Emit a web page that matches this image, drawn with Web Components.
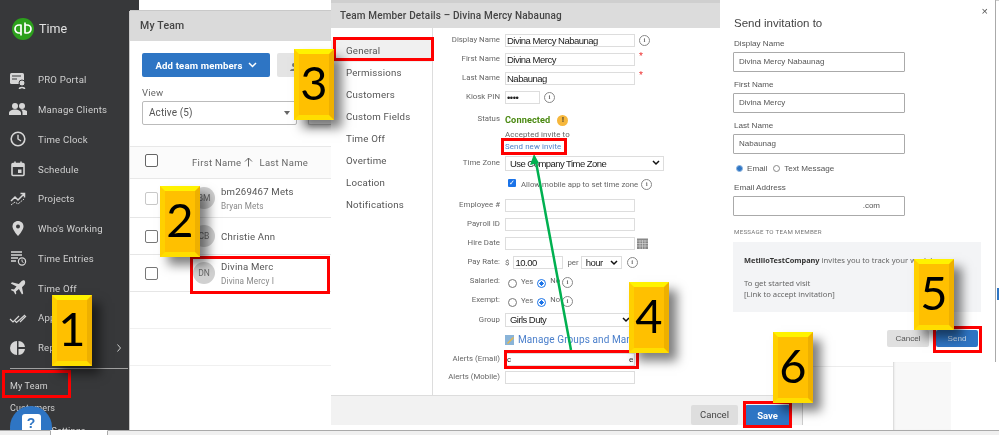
<!DOCTYPE html>
<html lang="en"><head><meta charset="utf-8"><title>My Team</title>
<style>
html,body{margin:0;padding:0;background:#fff;overflow:hidden}
body{font-family:"Roboto","Liberation Sans",sans-serif}
</style></head><body>
<tb-app>
  <tb-sidebar slot="sidebar">
    <nav-item icon="pro">PRO Portal</nav-item>
    <nav-item icon="clients">Manage Clients</nav-item>
    <nav-item icon="clock">Time Clock</nav-item>
    <nav-item icon="cal">Schedule</nav-item>
    <nav-item icon="proj">Projects</nav-item>
    <nav-item icon="pin">Who's Working</nav-item>
    <nav-item icon="entries">Time Entries</nav-item>
    <nav-item icon="plane">Time Off</nav-item>
    <nav-item icon="check">Approvals</nav-item>
    <nav-item icon="pie" chevron>Reports</nav-item>
    <sub-item slot="sub">My Team</sub-item>
    <sub-item slot="sub">Customers</sub-item>
    <sub-item slot="sub">Company Settings</sub-item>
  </tb-sidebar>
  <team-panel slot="team">
    <team-row initials="BM" name="bm269467 Mets" sub="Bryan Mets" h="39" light></team-row>
    <team-row initials="CB" name="Christie Ann" h="37"></team-row>
    <team-row initials="DN" name="Divina Merc" sub="Divina Mercy I" h="37"></team-row>
  </team-panel>
  <member-details slot="details">
    <form-row label="Display Name" h="19"><text-box w="130">Divina Mercy Nabaunag</text-box><info-icon></info-icon></form-row>
    <form-row label="First Name" h="19"><text-box w="130">Divina Mercy</text-box><req-mark></req-mark></form-row>
    <form-row label="Last Name" h="19"><text-box w="130">Nabaunag</text-box><req-mark></req-mark></form-row>
    <form-row label="Kiosk PIN" h="19"><text-box w="35">••••</text-box><info-icon></info-icon></form-row>
    <form-row label="Status" h="42" top style="margin-top:4px">
      <status-block></status-block>
    </form-row>
    <form-row label="Time Zone" h="21"><text-box w="159" select h="15">Use Company Time Zone</text-box></form-row>
    <form-row h="21"><allow-tz></allow-tz></form-row>
    <form-row label="Employee #" h="20"><text-box w="130"></text-box></form-row>
    <form-row label="Payroll ID" h="19"><text-box w="130"></text-box></form-row>
    <form-row label="Hire Date" h="19"><text-box w="130"></text-box><cal-icon></cal-icon></form-row>
    <form-row label="Pay Rate:" h="19"><pay-rate></pay-rate></form-row>
    <form-row label="Salaried:" h="19"><yes-no></yes-no></form-row>
    <form-row label="Exempt:" h="19"><yes-no></yes-no></form-row>
    <form-row label="Group" h="20"><text-box w="129" select h="14">Girls Duty</text-box></form-row>
    <form-row h="19"><manage-link></manage-link></form-row>
    <form-row label="Alerts (Email)" h="20"><text-box w="130"><span style="display:flex;justify-content:space-between;font-size:8px"><span>c</span><span>e</span></span></text-box></form-row>
    <form-row label="Alerts (Mobile)" h="17"><text-box w="130"></text-box></form-row>
  </member-details>
  <side-band slot="band"></side-band>
  <invite-modal slot="modal"></invite-modal>

  <tb-arrow slot="over"></tb-arrow>
  <red-box slot="over" style="left:2px;top:370px;width:69px;height:28px"></red-box>
  <red-box slot="over" style="left:190px;top:256px;width:140px;height:38px"></red-box>
  <red-box slot="over" style="left:333px;top:37px;width:101px;height:24px"></red-box>
  <red-box slot="over" style="left:501px;top:138px;width:66px;height:17px"></red-box>
  <red-box slot="over" style="left:504px;top:350px;width:135px;height:19px"></red-box>
  <red-box slot="over" style="left:933px;top:326px;width:49px;height:27px"></red-box>
  <red-box slot="over" style="left:743px;top:401px;width:49px;height:27px"></red-box>
  <step-badge slot="over" style="left:52px;top:295px">1</step-badge>
  <step-badge slot="over" style="left:160px;top:186px">2</step-badge>
  <step-badge slot="over" style="left:294px;top:49px">3</step-badge>
  <step-badge slot="over" style="left:629px;top:282px">4</step-badge>
  <step-badge slot="over" style="left:914px;top:259px">5</step-badge>
  <step-badge slot="over" style="left:773px;top:332px">6</step-badge>
</tb-app>

<script>
const def=(name,html,cls)=>{
  const t=document.createElement('template');t.innerHTML=html;
  customElements.define(name,class extends HTMLElement{
    constructor(){super();this.attachShadow({mode:'open'}).appendChild(t.content.cloneNode(true));}
    connectedCallback(){cls&&cls.call(this,this.shadowRoot);}
  });
};
const ICONS={
 pro:'<rect x="1" y="2" width="14" height="11" rx="1.5" fill="#d6d6d6"/><path d="M3 5h9M3 8h5" stroke="#37383a" stroke-width="1.2"/><circle cx="13" cy="12" r="3" fill="#d6d6d6" stroke="#37383a"/><path d="M10.5 18c0-2 5-2 5 0" stroke="#d6d6d6" stroke-width="1.6" fill="none"/>',
 clients:'<circle cx="6" cy="5" r="3" fill="#d6d6d6"/><circle cx="13" cy="5" r="3" fill="#d6d6d6"/><path d="M0 14v-2c0-2 3-3.500 6-3.500s6 1.500 6 3.500v2zM13 8.500c3 0 6 1.500 6 3.500v2h-5.500v-2c0-1.500-.5-2.500-1.500-3.400z" fill="#d6d6d6"/>',
 clock:'<circle cx="9" cy="9" r="6.800" fill="none" stroke="#d6d6d6" stroke-width="1.600"/><path d="M9 4.800V9l3 2" fill="none" stroke="#d6d6d6" stroke-width="1.400"/>',
 cal:'<rect x="3" y="3.500" width="12" height="12" rx="1" fill="none" stroke="#d6d6d6" stroke-width="1.600"/><path d="M3 4h12v3H3z" fill="#d6d6d6"/><path d="M6 1.500v2.500M12 1.500v2.500" stroke="#d6d6d6" stroke-width="1.500"/><rect x="9" y="9.500" width="3.500" height="3.500" fill="#d6d6d6"/>',
 proj:'<path d="M2 11l4-4 3 3 6-6M11.500 3.500H15.500v4" fill="none" stroke="#d6d6d6" stroke-width="1.500"/><path d="M2 15l4-3 3 2 6-5" fill="none" stroke="#d6d6d6" stroke-width="1" stroke-dasharray="2 1"/>',
 pin:'<path d="M9 1c-3.200 0-5.500 2.400-5.500 5.400C3.500 10 9 16 9 16s5.500-6 5.500-9.600C14.500 3.400 12.200 1 9 1z" fill="#d6d6d6"/><circle cx="9" cy="6.500" r="2" fill="#37383a"/>',
 entries:'<path d="M2 3h11M2 6h11M2 9h7M2 12h5" stroke="#d6d6d6" stroke-width="1.500"/><circle cx="13" cy="12.500" r="3.600" fill="#37383a" stroke="#d6d6d6" stroke-width="1.200"/><path d="M13 10.500v2l1.500 1" stroke="#d6d6d6" fill="none"/>',
 plane:'<path d="M15.500 1.500c-1-.6-2.500.2-3.500 1.200L9.800 5 3 3.200 1.800 4.400 7.500 7.500 5 10.500l-2.200-.4-1 1 3 1.500 1.500 3 1-1-.4-2.200 3-2.500 3.100 5.700 1.200-1.200L13 8.200l2.300-2.200c1-1 1.300-3.500.2-4.500z" fill="#d6d6d6"/>',
 check:'<path d="M1 10l3 3 6-6M6 12l1.500 1.500L16 6M11 13l6-6" fill="none" stroke="#d6d6d6" stroke-width="1.200"/>',
 pie:'<path d="M8 2a7 7 0 1 0 0 14z" fill="#d6d6d6"/><path d="M9.500 2a7 7 0 0 1 6.500 6H9.500zM9.500 10H16a7 7 0 0 1-6.500 6z" fill="#d6d6d6"/>'
};
def('tb-app',`<style>
:host{display:block;position:relative;width:999px;height:435px;overflow:hidden;background:#fff;filter:blur(.35px)}
.bar{position:absolute;left:0;right:0;top:430px;height:5px;background:#f0f0f0;border-top:1px solid #aaa;box-sizing:border-box}
.tab{position:absolute;left:50px;top:430px;width:58px;height:5px;background:#fff;border-left:1px solid #aaa;border-right:1px solid #aaa;border-top:1px solid #fff;box-sizing:border-box}
.topline{position:absolute;left:847px;right:0;top:0;height:1px;background:#ccc}
.line{position:absolute;left:802px;width:91px;top:366px;height:1px;background:#ececec}
.vline{position:absolute;left:802px;top:395px;height:30px;width:1px;background:#ccc}
.tick{position:absolute;left:997px;top:288px;width:2px;height:12px;background:#2e75c4}
</style><div class="topline"></div><div class="line"></div><div class="tick"></div>
<slot name="sidebar"></slot><slot name="team"></slot><slot name="details"></slot><div class="vline"></div><slot name="band"></slot><slot name="modal"></slot><div class="bar"></div><div class="tab"></div><slot name="over"></slot>`);

def('tb-sidebar',`<style>
:host{display:block;position:absolute;left:0;top:0;width:139px;height:430px;background:#37383a;overflow:hidden}
.logo{height:65px;box-sizing:border-box;padding:18px 0 0 12px;display:flex;align-items:flex-start;gap:5px;color:#e2e2e2;font-size:12.500px}
.logo span{line-height:22px}
.nav{display:grid;grid-auto-rows:29.75px;width:130px}
hr{margin:5px 2px 0 10px;width:118px;border:0;border-top:1px solid #a0a0a0;height:0}
.sub{padding-top:6px;width:130px}
.help{position:absolute;left:10px;top:406px;width:42px;height:42px;border-radius:50%;background:#2e75c4}
.help b{position:absolute;left:11.500px;top:8px;width:19px;height:24px;border-radius:3px;background:#fff;color:#2e75c4;text-align:center;font:700 14px/19px "Liberation Sans",sans-serif}
</style>
<div class="logo"><svg width="22" height="22" viewBox="0 0 22 22"><circle cx="11" cy="11" r="11" fill="#2ca01c"/><path d="M9 6.500v11M9 7H7a3.500 3.500 0 0 0 0 8h2M13 4.500v11M13 15h2a3.500 3.500 0 0 0 0-8h-2" fill="none" stroke="#fff" stroke-width="1.700"/></svg><span>Time</span></div>
<div class="nav"><slot></slot></div><hr><div class="sub"><slot name="sub"></slot></div>
<div class="help"><b>?</b></div>`);

def('nav-item',`<style>
:host{display:flex;align-items:center;height:29.75px;color:#cfcfcf;font-size:9.600px;letter-spacing:.2px;position:relative;white-space:nowrap}
svg{margin-left:9px;width:18px;height:18px;margin-right:11px;flex:none}
.chev{position:absolute;left:117px;top:11px;width:4px;height:8px;margin:0}
</style><svg viewBox="0 0 18 18"></svg><slot></slot>`,function(s){
  s.querySelector('svg').innerHTML=ICONS[this.getAttribute('icon')]||'';
  if(this.hasAttribute('chevron')){const d=document.createElementNS('http://www.w3.org/2000/svg','svg');d.setAttribute('class','chev');d.setAttribute('viewBox','0 0 4 8');d.innerHTML='<path d="M.5.500l3 3.500-3 3.500" fill="none" stroke="#ccc" stroke-width="1"/>';s.appendChild(d);}
});
def('sub-item',`<style>:host{display:block;height:22.500px;line-height:22.500px;padding-left:10px;color:#d2d2d2;font-size:9px;letter-spacing:.15px;white-space:nowrap}</style><slot></slot>`);

def('team-panel',`<style>
:host{display:block;position:absolute;left:130px;top:11px;width:201px;height:419px;background:#fff;box-shadow:-1px 0 0 #c9c9c9,0 -1px 0 #c9c9c9;overflow:hidden;color:#555;font-size:10.5px}
.head{height:30px;background:#dadada;padding-left:10px;line-height:30px;font-size:10.500px;letter-spacing:.2px;color:#444;font-weight:500}
.tools{padding:12px 0 0 12px;height:105px;box-sizing:border-box}
.btns{display:flex;gap:7px;height:24px}
.add{width:128px;background:#2e75c4;color:#fff;border-radius:2px;font-weight:700;font-size:9.600px;display:flex;align-items:center;justify-content:center;gap:5px;letter-spacing:.15px}
.sec{flex:1;background:#e4e4e4;border-radius:2px 0 0 2px;padding:8px 0 0 13px;box-sizing:border-box}
.view{margin-top:10px;font-size:9.500px;line-height:12px;letter-spacing:.2px;color:#666}
.sels{display:flex;gap:11px;margin-top:2px;height:24px}
.sel{box-sizing:border-box;width:155px;border:1px solid #bbb;border-radius:2px;line-height:22px;padding-left:6px;font-size:10px;letter-spacing:.1px;position:relative}
.sel:after{content:"";position:absolute;right:6px;top:9px;border:3.500px solid transparent;border-top:4px solid #666}
.more{flex:1;border:1px solid #bbb;border-right:0;border-radius:2px 0 0 2px;box-shadow:0 2px 4px #ccc;background:#eee}
.cols{height:33px;box-sizing:border-box;background:#fbfbfb;border-top:1px solid #e8e8e8;border-bottom:1px solid #e8e8e8;display:flex;align-items:center;padding-left:15px;color:#666;font-size:9.500px;letter-spacing:.3px}
.cols i{box-sizing:border-box;width:13px;height:13px;border:1.500px solid #666;border-radius:2px;margin-right:34px;background:#fff;margin-top:-4px}
.cols span{margin-top:-1px}
.cols svg{margin:-1px 6px 0 3px}
.empty{height:37px;border-bottom:1px solid #f0f0f0;box-sizing:border-box}
</style>
<div class="head">My Team</div>
<div class="tools">
 <div class="btns"><div class="add">Add team members <svg width="9" height="6" viewBox="0 0 9 6"><path d="M1 1l3.500 3.500L8 1" fill="none" stroke="#fff" stroke-width="1.500"/></svg></div><div class="sec"><svg width="8" height="8" viewBox="0 0 8 8"><circle cx="4" cy="2" r="2" fill="#777"/><path d="M0 8c0-3 8-3 8 0z" fill="#777"/></svg></div></div>
 <div class="view">View</div>
 <div class="sels"><div class="sel">Active (5)</div><div class="more"></div></div>
</div>
<div class="cols"><i></i><span>First Name</span><svg width="9" height="10" viewBox="0 0 9 10"><path d="M4.500 9.500V1M1 4.500L4.500 1 8 4.500" fill="none" stroke="#666" stroke-width="1"/></svg><span>Last Name</span></div>
<slot></slot><div class="empty"></div><div class="empty"></div>`);

def('team-row',`<style>
:host{display:flex;align-items:center;box-sizing:border-box;border-bottom:1px solid #e6e6e6;padding-left:15px;position:relative}
i{box-sizing:border-box;width:13px;height:13px;border:1.500px solid #777;border-radius:2px;margin-right:35px;flex:none}
:host([light]) i{border-color:#c8c8c8}
.av{width:22px;height:22px;border-radius:50%;background:#d0d0d0;color:#666;font-size:8.500px;line-height:22px;text-align:center;flex:none;margin-right:6px}
.t{margin-top:1px}
.n{font-size:9.600px;color:#555;letter-spacing:.2px;line-height:15px}
.s{font-size:8.200px;color:#888;letter-spacing:.15px;line-height:15px}
</style><i></i><div class="av"></div><div class="t"><div class="n"></div><div class="s"></div></div>`,function(s){
 this.style.height=this.getAttribute('h')+'px';
 s.querySelector('.av').textContent=this.getAttribute('initials');
 s.querySelector('.n').textContent=this.getAttribute('name');
 const b=this.getAttribute('sub');const e=s.querySelector('.s');if(b)e.textContent=b;else e.remove();
});

def('member-details',`<style>
:host{display:block;position:absolute;left:331px;top:0;width:471px;height:425px;background:#fff;overflow:hidden}
.strip{height:3px;background:#cfcfcf}
.head{height:25px;background:#dcdcdc;padding-left:9px;line-height:25px;font-size:10px;font-weight:500;letter-spacing:.15px;color:#444;white-space:nowrap}
.main{display:flex;height:367px}
.nav{width:102px;flex:none;border-right:1px solid #ddd;padding-top:12px;box-sizing:border-box}
.nav div{height:22px;line-height:22px;padding-left:15px;font-size:9.700px;color:#555;letter-spacing:.2px}
.nav .on{background:#f0f0f0}
.form{padding-top:3px;flex:1}
.foot{height:30px;background:#f2f2f2;border-top:1px solid #ddd;box-sizing:border-box;display:flex;gap:7px;padding:9px 12px 0 0;justify-content:flex-end}
.b{width:47px;height:20px;border-radius:2px;background:#dedede;color:#444;font-size:9.500px;text-align:center;line-height:20px}
.p{background:#2e75c4;color:#fff;font-weight:700;width:45px;height:21px;line-height:21px}
</style>
<div class="strip"></div><div class="head">Team Member Details – Divina Mercy Nabaunag</div>
<div class="main"><div class="nav"><div class="on">General</div><div>Permissions</div><div>Customers</div><div>Custom Fields</div><div>Time Off</div><div>Overtime</div><div>Location</div><div>Notifications</div></div>
<div class="form"><slot></slot></div></div>
<div class="foot"><div class="b">Cancel</div><div class="b p">Save</div></div>`);

def('form-row',`<style>
:host{display:flex;align-items:center;position:relative}
:host([top]){align-items:flex-start}
.l{width:67px;margin-right:5px;text-align:right;font-size:7.800px;color:#666;letter-spacing:.03px;white-space:nowrap;flex:none;margin-top:-2px}
:host([top]) .l{margin-top:3px}
.c{display:flex;align-items:center;gap:4px}
</style><div class="l"></div><div class="c"><slot></slot></div>`,function(s){
 this.style.height=this.getAttribute('h')+'px';
 s.querySelector('.l').textContent=this.getAttribute('label')||'';
});
def('text-box',`<style>
:host{display:block;box-sizing:border-box;border:1px solid #ddd;height:13px;line-height:11px;padding:0 1px;font:9.500px/11px "Liberation Sans",sans-serif;letter-spacing:-.5px;color:#222;position:relative;white-space:nowrap;overflow:hidden;background:#fff}
:host([select]){padding-left:4px;font-size:9.500px;letter-spacing:-.55px}
.ch{display:none;position:absolute;right:3px;top:3px}
:host([select]) .ch{display:block}
</style><slot></slot><svg class="ch" width="8" height="6" viewBox="0 0 8 6"><path d="M1 1l3 3 3-3" fill="none" stroke="#111" stroke-width="1.500"/></svg>`,function(){
 this.style.width=this.getAttribute('w')+'px';
 if(this.hasAttribute('h'))this.style.height=this.getAttribute('h')+'px';
 if(this.hasAttribute('h'))this.style.lineHeight=(this.getAttribute('h')-2)+'px';
});
def('info-icon',`<style>:host{display:inline-flex;width:11px;height:11px;box-sizing:border-box;border:1px solid #888;border-radius:50%;color:#777;font:700 7px/9px "Liberation Serif",serif;justify-content:center}</style>i`);
def('req-mark',`<style>:host{display:inline-block;color:#e33;font-size:9px;line-height:9px;margin-top:-6px}</style>*`);
def('cal-icon',`<style>:host{display:inline-flex;margin-left:-2px}</style><svg width="11" height="11" viewBox="0 0 11 11"><rect width="11" height="11" y=".5" fill="#888"/><path d="M0 3h11M0 5.500h11M0 8h11M3 2v9M5.500 2v9M8 2v9" stroke="#ddd" stroke-width=".6"/></svg>`);
def('status-block',`<style>
:host{display:block;font-size:7.900px;color:#666;letter-spacing:.1px;white-space:nowrap;position:relative}
.c{height:18px;line-height:18px;font-weight:700;color:#4b8a12;font-size:9.200px;display:flex;align-items:center;gap:7px}
.w{display:inline-block;width:11px;height:11px;border-radius:50%;background:#f6b73c;color:#333;font-size:7px;line-height:11px;text-align:center;margin-top:1px}
.a{height:12px;line-height:12px;width:65px;overflow:hidden}
.s{height:12px;line-height:12px;color:#4a7fcb}
</style><div class="c">Connected <span class="w">!</span></div><div class="a">Accepted invite to c</div><div class="s">Send new invite</div>`);
def('allow-tz',`<style>
:host{display:flex;align-items:center;font-size:7.800px;color:#666;padding-left:3px;white-space:nowrap}
.cb{width:8px;height:8px;background:#1a73e8;border-radius:1px;color:#fff;font-size:7px;line-height:8px;text-align:center;margin:-3px 5px 0 0}
.t{margin:-1px 3px 0 0}
</style><span class="cb">✓</span><span class="t">Allow mobile app to set time zone</span><info-icon></info-icon>`);
def('pay-rate',`<style>
:host{display:flex;align-items:center;font-size:7.900px;color:#666;gap:2px}
</style><span>$</span><text-box w="50" style="margin-left:2px">10.00</text-box><span style="margin-left:2px">per</span><text-box w="41" select style="height:13px">hour</text-box><info-icon style="margin-left:3px"></info-icon>`);
def('yes-no',`<style>
:host{display:flex;align-items:center;font-size:7.600px;color:#666;padding-left:3px;width:68px;position:relative;height:12px}
i{box-sizing:border-box;width:9px;height:9px;border:1px solid #777;border-radius:50%;display:inline-block;flex:none;margin-top:3px}
i.on{background:radial-gradient(circle,#1a73e8 40%,#fff 45%);border-color:#1a73e8}
.y{margin:0 4px 0 4px}
.n{margin-left:4px}
.x{position:absolute;left:57px;top:1px}
span{margin-top:-2px}
</style><i></i><span class="y">Yes</span><i class="on"></i><span class="n">No</span><info-icon class="x"></info-icon>`);
def('manage-link',`<style>
:host{display:flex;align-items:center;gap:3px;color:#4a7fcb;font-size:10px;white-space:nowrap;letter-spacing:.1px}
svg{flex:none}
</style><svg width="10" height="10" viewBox="0 0 10 10"><rect width="9" height="10" fill="#8ab4d8"/><path d="M2 8l6-6 1 1-6 6z" fill="#e8b84a"/></svg><span>Manage Groups and Managers</span>`);

def('side-band',`<style>:host{display:block;position:absolute;left:893px;top:362px;width:58px;height:68px;background:#f8f8f8;box-shadow:inset 2px 0 2px -1px #d5d5d5}</style>`);
def('invite-modal',`<style>
:host{display:block;position:absolute;left:720px;top:0;width:275px;height:362px;background:#fff;border-right:1px solid #aaa;box-sizing:content-box;color:#555;font-family:"Liberation Sans",sans-serif;padding-left:0}
.in{padding:16px 14px 0 13px;position:relative;height:100%;box-sizing:border-box}
.x{position:absolute;right:7px;top:4px;font-size:11px;color:#555;line-height:14px}
h2{margin:0 0 0 1px;font-weight:400;font-size:11.500px;line-height:14px;color:#444}
label{display:block;margin-top:7px;font-size:8.100px;line-height:13px;color:#555;padding-left:1px}
.f{box-sizing:border-box;width:172px;height:20px;border:1px solid #aaa;border-radius:1px;margin-top:2px;padding-left:5px;font-size:8px;line-height:18px;color:#555}
.f+label{margin-top:6px}
.f.r{text-align:right;padding-right:24px}
.radio{display:flex;align-items:center;height:14px;margin:7px 0 0 3px;font-size:8.100px}
.radio i{box-sizing:border-box;width:7px;height:7px;border-radius:50%;border:1px solid #888;display:inline-block}
.radio i.on{background:#2e75c4;border-color:#8fb6e0}
.radio .e{margin:0 6px 0 4px}
.radio .tm{margin-left:4px}
.m{margin:10px 0 0 1px;font:6.200px/12px "Roboto",sans-serif;letter-spacing:.25px;color:#777;white-space:nowrap}
.box{margin:4px 0 0 0;background:#f3f4f6;height:70px;box-sizing:border-box;padding:13px 11px;font:7.700px/11.500px "Noto Sans","Roboto",sans-serif;color:#666;width:248px;white-space:nowrap}
.box b{color:#333;font-weight:700;font-size:7.400px}
.box p{margin:0}.box p+p{margin-top:11px}
.btns{display:flex;gap:7px;justify-content:flex-end;margin:18px 3px 0 0}
.btns div{width:42px;height:17px;border-radius:2px;background:#e0e0e0;text-align:center;line-height:17px;font-size:8.100px;color:#555}
.btns .p{background:#2e75c4;color:#cfe0f2}
</style><div class="in"><span class="x">×</span>
<h2>Send invitation to</h2>
<label style="margin-top:7px">Display Name</label><div class="f">Divina Mercy Nabaunag</div>
<label>First Name</label><div class="f">Divina Mercy</div>
<label>Last Name</label><div class="f">Nabaunag</div>
<div class="radio"><i class="on"></i><span class="e">Email</span><i></i><span class="tm">Text Message</span></div>
<label style="margin-top:6px">Email Address</label><div class="f r">.com</div>
<div class="m">MESSAGE TO TEAM MEMBER</div>
<div class="box"><p><b>MetilloTestCompany</b> invites you to track your work hours</p><p>To get started visit<br>[Link to accept invitation]</p></div>
<div class="btns"><div>Cancel</div><div class="p">Send</div></div></div>`);

def('red-box',`<style>:host{display:block;position:absolute;box-sizing:border-box;border:3px solid #f00;pointer-events:none}</style>`);
def('step-badge',`<style>
:host{display:block;position:absolute;box-sizing:border-box;width:40px;height:71px;background:#ffc000;box-shadow:8px 8px 10px rgba(0,0,0,.5);font:47px/67px Lato,"Liberation Sans",sans-serif;color:#000;text-align:center}
.b{position:absolute;inset:0;box-sizing:border-box;border:5px solid;border-color:#fff200 #eeb000 #ffde00 #ffd000}
.t{position:relative;display:block}
</style><span class="b"></span><span class="t"><slot></slot></span>`);
def('tb-arrow',`<style>:host{display:block;position:absolute;left:0;top:0;width:999px;height:435px;pointer-events:none}</style>
<svg width="999" height="435"><path d="M571 350L536 162" stroke="#00b050" stroke-width="2.500" fill="none"/><path d="M534 154l-4 11 9-2z" fill="#00b050"/></svg>`);
</script>
</body></html>
